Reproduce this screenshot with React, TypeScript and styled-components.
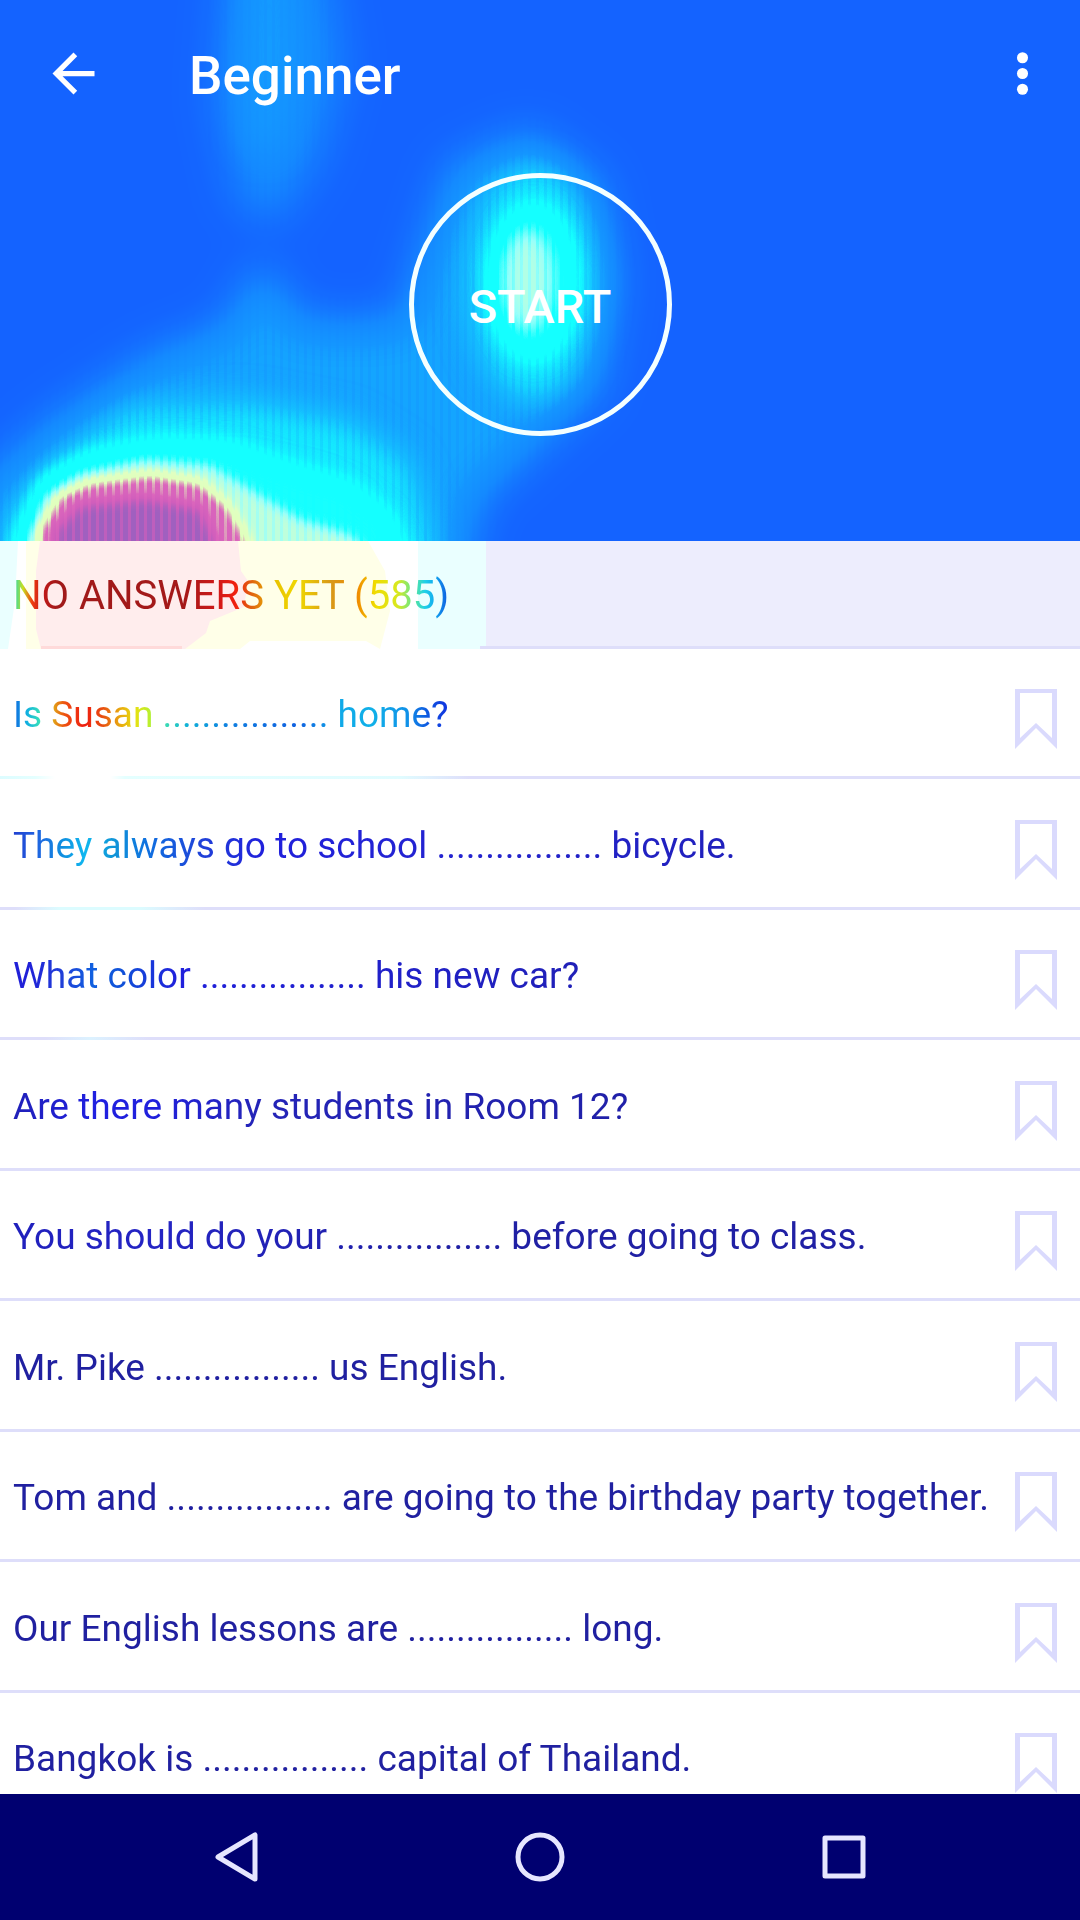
import React from "react";
import styled, { createGlobalStyle } from "styled-components";

const GlobalStyle = createGlobalStyle`
  *, *::before, *::after { box-sizing: border-box; }
  body { margin: 0; background: #ffffff; font-family: Roboto, "Noto Sans", sans-serif; }
  button { margin: 0; padding: 0; border: 0; background: none; color: inherit; font: inherit; cursor: pointer; }
`;

const Screen = styled.div`
  display: flex;
  flex-direction: column;
  height: 100vh;
  overflow: hidden;
`;

const Hero = styled.header`
  position: relative;
  flex: none;
  display: flex;
  flex-direction: column;
  padding-bottom: 105px;
  overflow: hidden;
  background: #1464ff;
  color: #ffffff;
`;

const Backdrop = styled.svg`
  position: absolute;
  top: 0;
  left: 0;
`;

const AppBar = styled.div`
  position: relative;
  display: flex;
  align-items: center;
  height: 147px;
  padding: 0 26px 0 42px;
`;

const IconButton = styled.button`
  display: flex;
  width: 63px;
  height: 63px;

  svg { width: 63px; height: 63px; fill: currentColor; }
`;

const Title = styled.h1`
  flex: 1;
  margin: 0;
  padding: 4px 0 0 84px;
  font-size: 53px;
  line-height: 62px;
  font-weight: 500;
`;

const StartButton = styled.button`
  position: relative;
  align-self: center;
  width: 263px;
  height: 263px;
  margin-top: 26px;
  padding-top: 4px;
  border: 5px solid #f4ffff;
  border-radius: 50%;
  font-size: 47px;
  line-height: 56px;
  font-weight: 500;
`;

const SectionBar = styled.div`
  position: relative;
  flex: none;
  display: flex;
  align-items: center;
  height: 108px;
  padding: 2px 13px 0;
  overflow: hidden;
  background: #ededfd;
`;

const inkStyles = (ink: string) => `
  background: ${ink};
  background-clip: text;
  -webkit-background-clip: text;
  color: transparent;
`;

const SectionTitle = styled.h2<{ $ink: string }>`
  position: relative;
  flex: 1;
  margin: 0;
  font-size: 40px;
  line-height: 48px;
  font-weight: 400;
  ${(p) => inkStyles(p.$ink)}
`;

const List = styled.ul`
  flex: 1;
  min-height: 0;
  display: grid;
  grid-auto-rows: 130px 131px;
  align-content: start;
  margin: 0;
  padding: 0;
  overflow: hidden;
  list-style: none;
`;

const Row = styled.li<{ $rule: string }>`
  display: flex;
  align-items: center;
  padding: 2px 23px 0 13px;
  background: ${(p) => p.$rule} left bottom / 100% 3px no-repeat;
`;

const Question = styled.span<{ $ink: string }>`
  flex: 1;
  min-width: 0;
  font-size: 37px;
  line-height: 44px;
  white-space: nowrap;
  ${(p) => inkStyles(p.$ink)}
`;

const BookmarkButton = styled.button`
  display: flex;
  padding-top: 8px;

  svg { width: 42px; height: 60px; fill: #dadafd; }
`;

const SystemBar = styled.nav`
  flex: none;
  display: grid;
  grid-template-columns: repeat(3, 1fr);
  height: 126px;
  padding: 0 84px;
  background: #000070;
`;

const SystemButton = styled.button`
  display: flex;
  align-items: center;
  justify-content: center;

  svg { width: 50px; height: 50px; fill: none; stroke: #e6e6ff; stroke-width: 5; stroke-linejoin: round; }
`;

const RULE = "linear-gradient(#dedefa, #dedefa)";
const LATE_INK = "linear-gradient(#2020a0, #2020a0)";

const SECTION_INK =
  "linear-gradient(90deg, #38d8a0 2px, #c8e020 10px, #f03c10 19px, #c01818 30px, #a01a1a 45px, #a41818 170px, #d01818 205px, #f02010 222px, #e06010 238px, #e8c000 260px, #f0d800 285px, #d89818 318px, #f08c00 345px, #f0dc00 362px, #d8e820 385px, #60e890 400px, #20d0e8 412px, #10a8f0 422px, #1060e0 434px)";

type Item = { text: string; ink: string; rule?: string };

const questions: Item[] = [
  {
    text: "Is Susan ................. home?",
    ink: "linear-gradient(90deg, #1070e0 2px, #10b0e0 14px, #38e0b8 27px, #e0a818 40px, #ee5010 52px, #ee1c10 72px, #e85010 90px, #e8a010 105px, #e8e010 122px, #b8f030 137px, #40e0b0 150px, #10b0d8 175px, #1080e0 215px, #1060e0 285px, #10a8e8 325px, #10b0e8 360px, #1090e8 395px, #1058e0 415px, #1038e0 432px)",
    rule: "linear-gradient(90deg, #dcfcff 0, #e4ffff 35px, #ffffff 55px, #ffffff 110px, #e4ffff 125px, #e0fcff 400px, #dedefa 470px)",
  },
  {
    text: "They always go to school ................. bicycle.",
    ink: "linear-gradient(90deg, #2040d0 0, #2060e0 22px, #1090e0 50px, #10b8f0 72px, #1098d8 98px, #1070e0 135px, #2040d8 190px, #2020dc 250px, #2424d0 440px, #2020bc 720px)",
    rule: "linear-gradient(90deg, #dedefa 15px, #dcfcff 60px, #dcfcff 140px, #dedefa 205px)",
  },
  {
    text: "What color ................. his new car?",
    ink: "linear-gradient(90deg, #2020d8 15px, #2040d8 50px, #1060e0 80px, #1050d8 110px, #2020dc 165px, #2020b8 560px)",
    rule: "linear-gradient(90deg, #dedefa 45px, #dcf2ff 90px, #dedefa 150px)",
  },
  { text: "Are there many students in Room 12?", ink: "linear-gradient(90deg, #2020b8 0, #2020e0 80px, #2020dc 140px, #2424b8 240px, #2020a8 620px)" },
  { text: "You should do your ................. before going to class.", ink: "linear-gradient(90deg, #2020bc 0, #2424c4 140px, #2020a4 420px)" },
  { text: "Mr. Pike ................. us English.", ink: LATE_INK },
  { text: "Tom and ................. are going to the birthday party together.", ink: LATE_INK },
  { text: "Our English lessons are ................. long.", ink: LATE_INK },
  { text: "Bangkok is ................. capital of Thailand.", ink: LATE_INK },
];

/* Grey levels are intensities; the transfer tables turn them into the heat palette. */
const HeroHeat = () => (
  <Backdrop width="1080" height="541" aria-hidden="true">
    <defs>
      <filter id="palette" filterUnits="userSpaceOnUse" x="0" y="0" width="1080" height="541" colorInterpolationFilters="sRGB">
        <feComponentTransfer>
          <feFuncR type="table" tableValues="0.08 0.08 0.08 0.08 0.08 0.08 0.08 0.6 0.88 0.88 0.86 0.82 0.63" />
          <feFuncG type="table" tableValues="0.39 0.46 0.54 0.59 0.74 1 1 1 1 1 0.4 0.37 0.38" />
          <feFuncB type="table" tableValues="1 1 1 1 1 1 1 0.98 0.76 0.74 0.74 0.74 0.75" />
        </feComponentTransfer>
      </filter>
      {[6, 10, 16, 22].map((d) => (
        <filter key={d} id={`soft${d}`} filterUnits="userSpaceOnUse" x="-100" y="-100" width="1280" height="800" colorInterpolationFilters="sRGB">
          <feGaussianBlur stdDeviation={d} />
        </filter>
      ))}
      <pattern id="comb" width="8" height="8" patternUnits="userSpaceOnUse">
        <rect width="3" height="8" fill="#000" opacity="0.05" />
      </pattern>
    </defs>
    <g filter="url(#palette)">
      <rect width="1080" height="541" fill="#000" />
      <g filter="url(#soft22)">
        <path d="M228-60H325L345 70 320 160 275 225 238 205 215 100Z" fill="#303030" />
        <path d="M-30 640V490L50 420 150 355 225 325 262 260 300 320 400 320 425 240 450 165 530 130 600 180 618 280 600 390 535 450 480 500 450 640Z" fill="#484848" />
      </g>
      <g filter="url(#soft16)">
        <path d="M247-40H290L300 60 280 150 248 150 240 60Z" fill="#444" />
        <path d="M-10 640L5 520 55 455 130 405 250 400 350 420 410 460 435 540 435 640Z" fill="#646464" />
        <ellipse cx="533" cy="282" rx="66" ry="120" fill="#646464" />
      </g>
      <g filter="url(#soft10)">
        <path d="M14 640V540L40 478 90 453 160 440 230 444 290 466 350 484 390 515 408 560V640Z" fill="#808080" />
        <ellipse cx="533" cy="282" rx="44" ry="78" fill="#7c7c7c" />
        <ellipse cx="528" cy="280" rx="27" ry="52" fill="#9c9c9c" />
      </g>
      <g filter="url(#soft6)">
        <path d="M28 640V545L44 498 80 474 145 460 210 466 250 490 300 520 350 535 375 560V640Z" fill="#a0a0a0" />
        <path d="M38 640V530L60 495 90 482 150 474 200 482 228 505 248 540V640Z" fill="#d8d8d8" />
        <path d="M55 640V530L80 505 145 498 200 508 215 540V640Z" fill="#fff" />
      </g>
      <rect width="1080" height="541" fill="url(#comb)" />
    </g>
  </Backdrop>
);

const SectionHeat = () => (
  <Backdrop width="490" height="108" aria-hidden="true">
    <rect width="486" height="108" fill="#eaffff" />
    <path d="M18 0H418V108H8L15 60Z" fill="#ffffff" />
    <path d="M26 0H368L385 30 390 70 380 108 366 100 250 100 240 108H26Z" fill="#ffffe8" />
    <path d="M40 0H238L241 30 248 40 244 66 210 80 206 92 185 108H41L36 88V30Z" fill="#ffeded" />
    <path d="M41 105H182V108H41Z" fill="#ffdada" />
  </Backdrop>
);

const SectionRule = styled.span`
  position: absolute;
  inset: auto 0 0 480px;
  height: 3px;
  background: #dedefa;
`;

export default function App() {
  return (
    <Screen>
      <GlobalStyle />
      <Hero>
        <HeroHeat />
        <AppBar>
          <IconButton type="button" aria-label="Back">
            <svg viewBox="0 0 24 24"><path d="M20 11H7.83l5.59-5.59L12 4l-8 8 8 8 1.41-1.41L7.83 13H20v-2z" /></svg>
          </IconButton>
          <Title>Beginner</Title>
          <IconButton type="button" aria-label="More options">
            <svg viewBox="0 0 24 24">
              <circle cx="12" cy="6" r="2.1" />
              <circle cx="12" cy="12" r="2.1" />
              <circle cx="12" cy="18" r="2.1" />
            </svg>
          </IconButton>
        </AppBar>
        <StartButton type="button">START</StartButton>
      </Hero>
      <SectionBar>
        <SectionHeat />
        <SectionRule />
        <SectionTitle $ink={SECTION_INK}>NO ANSWERS YET (585)</SectionTitle>
      </SectionBar>
      <List>
        {questions.map((q) => (
          <Row key={q.text} $rule={q.rule ?? RULE}>
            <Question $ink={q.ink}>{q.text}</Question>
            <BookmarkButton type="button" aria-label="Bookmark">
              <svg viewBox="0 0 42 60">
                <path fillRule="evenodd" d="M0 0H42V60L21 39 0 60ZM5 4V49L21 34 37 49V4Z" />
              </svg>
            </BookmarkButton>
          </Row>
        ))}
      </List>
      <SystemBar>
        <SystemButton type="button" aria-label="Back">
          <svg viewBox="0 0 50 50"><path d="M7 25 44 3V47Z" /></svg>
        </SystemButton>
        <SystemButton type="button" aria-label="Home">
          <svg viewBox="0 0 50 50"><circle cx="25" cy="25" r="22" /></svg>
        </SystemButton>
        <SystemButton type="button" aria-label="Recent apps">
          <svg viewBox="0 0 50 50"><rect x="6" y="6" width="38" height="38" /></svg>
        </SystemButton>
      </SystemBar>
    </Screen>
  );
}
